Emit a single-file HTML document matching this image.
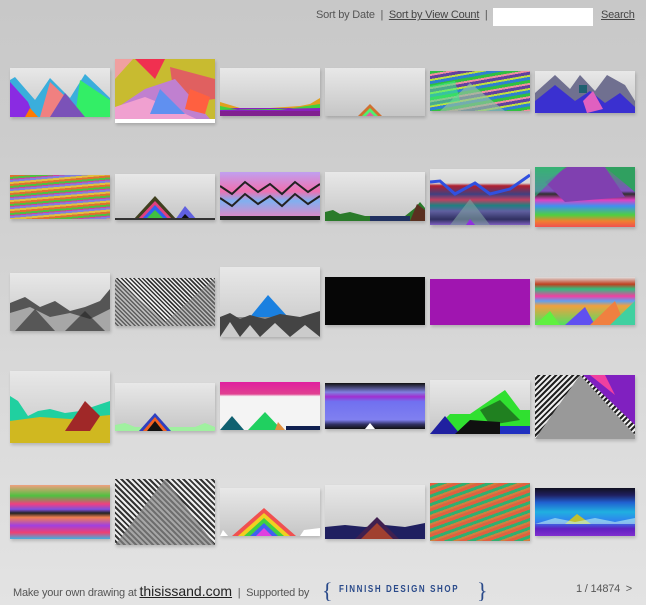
<!DOCTYPE html>
<html><head><meta charset="utf-8"><style>
*{margin:0;padding:0;box-sizing:border-box}
body{width:646px;height:605px;overflow:hidden;background:linear-gradient(#c8c8c8 0px,#cdcdcd 150px,#dadada 400px,#e3e3e3 605px);font-family:"Liberation Sans",sans-serif;position:relative}
.t{position:absolute;width:100px;overflow:hidden;box-shadow:1px 2px 3px rgba(0,0,0,.18)}
.t svg{position:absolute;left:0;top:0;width:100%;height:100%}
.sky{background:linear-gradient(#e8e8e8,#c6c6c6)}
.top{position:absolute;top:9px;font-size:11px;color:#555;letter-spacing:-.2px}
.top a{color:#444;text-decoration:underline}
.foot{position:absolute;top:583px;font-size:11px;color:#555;letter-spacing:-.2px}
</style></head><body>
<div class="top" style="left:316px">Sort by Date &nbsp;|&nbsp; <a>Sort by View Count</a> &nbsp;|</div>
<div style="position:absolute;left:493px;top:8px;width:100px;height:18px;background:#fff"></div>
<div class="top" style="left:601px"><a>Search</a></div>

<!-- Row 1 -->
<div class="t sky" style="left:10px;top:68px;height:49px"><svg viewBox="0 0 100 49" preserveAspectRatio="none"><polygon points="0,49 0,12 5,9 25,32 40,10 60,30 75,6 100,30 100,49" fill="#3aaedc"/><polygon points="0,49 0,14 18,34 24,49" fill="#8a2be2"/><polygon points="40,14 60,33 50,49 30,49" fill="#f08080"/><polygon points="70,12 100,32 100,49 65,49" fill="#33ee66"/><polygon points="55,25 75,49 40,49" fill="#7b52b8"/><polygon points="20,40 28,49 15,49" fill="#ff7a00"/></svg></div>
<div class="t" style="left:115px;top:59px;height:64px;background:#c8bb30"><svg viewBox="0 0 100 64" preserveAspectRatio="none"><polygon points="20,0 50,0 40,20" fill="#f03050"/><polygon points="55,8 100,20 100,40 60,45" fill="#e06060"/><polygon points="30,30 60,20 95,60 0,64 0,50" fill="#c080d0"/><polygon points="0,48 30,38 60,50 90,64 0,64" fill="#f0a0d0"/><polygon points="45,30 70,55 35,55" fill="#6090f0"/><polygon points="0,0 18,0 0,20" fill="#f0a0a0"/><rect x="0" y="60" width="100" height="4" fill="#fff"/><polygon points="75,30 95,38 90,55 70,50" fill="#ff6040"/></svg></div>
<div class="t sky" style="left:220px;top:68px;height:48px"><svg viewBox="0 0 100 48" preserveAspectRatio="none"><polygon points="0,48 0,34 20,40 50,40 80,38 90,36 100,30 100,48" fill="#e0a020"/><polygon points="0,48 0,40 100,40 100,48" fill="#8a20c0"/><rect x="0" y="43" width="100" height="5" fill="#802090"/><polygon points="0,38 20,42 60,42 100,36 100,40 0,42" fill="#40d040"/></svg></div>
<div class="t sky" style="left:325px;top:68px;height:48px"><svg viewBox="0 0 100 48" preserveAspectRatio="none"><polygon points="33,48 45,36 57,48" fill="#d07030"/><polygon points="37,48 45,40 53,48" fill="#50f070"/><polygon points="41,48 45,44 49,48" fill="#e060a0"/></svg></div>
<div class="t" style="left:430px;top:71px;height:40px;background:repeating-linear-gradient(170deg,#30c040 0 3px,#f090a0 3px 5px,#6040a0 5px 8px,#c0e040 8px 10px,#3080d0 10px 13px)"><svg viewBox="0 0 100 40" preserveAspectRatio="none"><polygon points="10,40 40,12 75,40" fill="#90c0a0" opacity=".7"/><polygon points="0,15 25,10 30,30 0,35" fill="#40f080" opacity=".6"/></svg></div>
<div class="t sky" style="left:535px;top:71px;height:42px"><svg viewBox="0 0 100 42" preserveAspectRatio="none"><polygon points="0,42 0,22 20,4 35,18 45,4 60,20 72,4 90,14 100,30 100,42" fill="#707090"/><polygon points="0,42 0,30 20,14 40,30 55,20 70,32 85,22 100,36 100,42" fill="#3a30d0"/><polygon points="48,30 58,20 68,38 52,42" fill="#e060c0"/><rect x="44" y="14" width="8" height="8" fill="#206070"/></svg></div>

<!-- Row 2 -->
<div class="t" style="left:10px;top:175px;height:44px;background:repeating-linear-gradient(175deg,#e07030 0 2px,#50c040 2px 4px,#d040a0 4px 5px,#8080e0 5px 7px,#e0c040 7px 9px)"></div>
<div class="t sky" style="left:115px;top:174px;height:46px"><svg viewBox="0 0 100 46" preserveAspectRatio="none"><polygon points="18,46 40,22 62,46" fill="#404020"/><polygon points="22,46 40,27 58,46" fill="#e04080"/><polygon points="26,46 40,31 54,46" fill="#3060f0"/><polygon points="30,46 40,36 50,46" fill="#40c040"/><polygon points="60,46 70,32 82,46" fill="#6060e0"/><polygon points="65,46 70,40 76,46" fill="#111"/><rect x="0" y="44" width="100" height="2" fill="#333"/></svg></div>
<div class="t" style="left:220px;top:172px;height:48px;background:linear-gradient(#c0a0f0,#f070b0 40%,#80b0f0 60%,#f080c0)"><svg viewBox="0 0 100 48" preserveAspectRatio="none"><polyline points="0,14 12,22 25,10 38,20 50,12 62,22 75,10 88,20 100,12" fill="none" stroke="#222" stroke-width="2"/><polyline points="0,26 12,34 25,22 38,32 50,24 62,34 75,22 88,32 100,24" fill="none" stroke="#222" stroke-width="2"/><rect x="0" y="44" width="100" height="4" fill="#222"/></svg></div>
<div class="t sky" style="left:325px;top:172px;height:49px"><svg viewBox="0 0 100 49" preserveAspectRatio="none"><polygon points="0,49 0,40 8,38 15,42 25,40 40,44 60,44 80,44 90,36 95,30 100,36 100,49" fill="#2a7a2a"/><polygon points="45,49 45,44 85,44 85,49" fill="#203060"/><polygon points="85,49 92,32 100,38 100,49" fill="#5a3020"/></svg></div>
<div class="t" style="left:430px;top:169px;height:56px;background:linear-gradient(#e6e6e6 0,#d8d8d8 25%,#b02030 30%,#404080 45%,#c04060 55%,#208080 65%,#6060a0 75%,#303060 90%,#8060c0)"><svg viewBox="0 0 100 56" preserveAspectRatio="none"><polyline points="0,13 10,12 25,25 45,14 60,25 80,20 100,6" fill="none" stroke="#3050e0" stroke-width="3"/><polygon points="20,56 40,30 60,56" fill="#80a0a0" opacity=".6"/><polygon points="36,56 40,50 45,56" fill="#9030e0"/></svg></div>
<div class="t" style="left:535px;top:167px;height:60px;background:linear-gradient(#40a060 0,#8050c0 40%,#303030 45%,#e040c0 55%,#4090f0 65%,#50d040 80%,#f08030 90%,#f05050)"><svg viewBox="0 0 100 60" preserveAspectRatio="none"><polygon points="10,15 32,0 70,0 90,30 30,35" fill="#8040b0"/><polygon points="0,0 30,0 0,30" fill="#30c080" opacity=".6"/><polygon points="70,0 100,0 100,25" fill="#30a060"/></svg></div>

<!-- Row 3 -->
<div class="t sky" style="left:10px;top:273px;height:58px"><svg viewBox="0 0 100 58" preserveAspectRatio="none"><polygon points="0,58 0,30 15,24 30,34 45,28 60,38 75,34 90,28 100,16 100,58" fill="#555"/><polygon points="0,58 0,40 20,34 40,44 60,40 80,46 100,36 100,58" fill="#ddd" opacity=".6"/><polygon points="5,58 25,36 45,58" fill="#222" opacity=".6"/><polygon points="55,58 75,38 95,58" fill="#222" opacity=".6"/></svg></div>
<div class="t" style="left:115px;top:278px;height:48px;background:repeating-linear-gradient(45deg,#eee 0 1.5px,#333 1.5px 3px)"><svg viewBox="0 0 100 48" preserveAspectRatio="none"><polygon points="0,0 50,44 100,0 100,48 0,48" fill="#888" opacity=".5"/></svg></div>
<div class="t sky" style="left:220px;top:267px;height:70px"><svg viewBox="0 0 100 70" preserveAspectRatio="none"><polygon points="30,50 48,28 68,50" fill="#1a80e0"/><rect x="0" y="50" width="100" height="20" fill="#888"/><polygon points="0,70 0,50 10,46 20,52 30,48 45,52 60,47 80,50 100,44 100,70" fill="#444"/><polygon points="0,70 10,55 20,70 30,58 40,70 55,56 70,70 85,58 100,70" fill="#eee" opacity=".8"/></svg></div>
<div class="t" style="left:325px;top:277px;height:48px;background:#060606"></div>
<div class="t" style="left:430px;top:279px;height:46px;background:#a015b0"></div>
<div class="t" style="left:535px;top:277px;height:48px;background:linear-gradient(#e0e0e0 0,#c04020 15%,#30c080 25%,#f040a0 40%,#60a0f0 50%,#f0a040 60%,#50e060)"><svg viewBox="0 0 100 48" preserveAspectRatio="none"><polygon points="30,48 50,30 60,48" fill="#6050f0"/><polygon points="55,48 80,24 90,48" fill="#f08040"/><polygon points="75,48 100,24 100,48" fill="#40d0a0"/><polygon points="0,48 15,34 25,48" fill="#60f040"/></svg></div>

<!-- Row 4 -->
<div class="t sky" style="left:10px;top:371px;height:72px"><svg viewBox="0 0 100 72" preserveAspectRatio="none"><polygon points="0,72 0,25 8,30 18,45 28,40 40,38 55,42 70,40 85,35 100,30 100,72" fill="#20d0a0"/><polygon points="0,72 0,50 30,46 60,48 100,44 100,72" fill="#d0b820"/><polygon points="55,60 75,30 90,45 80,60" fill="#a02828"/></svg></div>
<div class="t sky" style="left:115px;top:383px;height:48px"><svg viewBox="0 0 100 48" preserveAspectRatio="none"><polygon points="0,48 0,42 10,40 20,44 80,44 90,40 100,44 100,48" fill="#a0f0a0"/><polygon points="24,48 40,30 56,48" fill="#3040c0"/><polygon points="28,48 40,34 52,48" fill="#f06020"/><polygon points="32,48 40,38 48,48" fill="#111"/></svg></div>
<div class="t" style="left:220px;top:382px;height:48px;background:linear-gradient(#e020a0 0,#e04090 25%,#f4f4f4 30%,#f4f4f4 100%)"><svg viewBox="0 0 100 48" preserveAspectRatio="none"><polygon points="0,48 12,34 24,48" fill="#106070"/><polygon points="28,48 45,30 62,48" fill="#20d060"/><polygon points="58,40 65,48 55,48" fill="#e09040"/><rect x="66" y="44" width="34" height="4" fill="#102050"/></svg></div>
<div class="t" style="left:325px;top:383px;height:46px;background:linear-gradient(#101010 0,#8080e0 20%,#a030d0 30%,#7070f0 40%,#8080f0 80%,#303060 90%,#111)"><svg viewBox="0 0 100 46" preserveAspectRatio="none"><polygon points="40,46 45,40 50,46" fill="#fff"/></svg></div>
<div class="t sky" style="left:430px;top:380px;height:54px"><svg viewBox="0 0 100 54" preserveAspectRatio="none"><polygon points="0,54 20,34 40,34 75,10 90,30 100,30 100,54" fill="#30e030"/><polygon points="50,30 70,20 90,40 60,45" fill="#208020"/><polygon points="0,54 15,36 30,54" fill="#2020a0"/><polygon points="25,54 40,40 70,42 70,54" fill="#101010"/><rect x="70" y="46" width="30" height="8" fill="#2030c0"/></svg></div>
<div class="t" style="left:535px;top:375px;height:64px;background:repeating-linear-gradient(135deg,#eee 0 2px,#222 2px 4px)"><svg viewBox="0 0 100 64" preserveAspectRatio="none"><polygon points="0,64 45,0 100,60 100,64" fill="#999"/><polygon points="48,0 100,0 100,50" fill="#8020c0"/><polygon points="55,0 70,0 80,20" fill="#f040a0"/></svg></div>

<!-- Row 5 -->
<div class="t" style="left:10px;top:485px;height:54px;background:linear-gradient(#f0a080 0,#50c040 20%,#f04080 35%,#8050e0 45%,#222 52%,#f08050 60%,#a040e0 75%,#f04070 88%,#40b0e0)"></div>
<div class="t" style="left:115px;top:479px;height:66px;background:repeating-linear-gradient(45deg,#eee 0 2px,#333 2px 4px)"><svg viewBox="0 0 100 66" preserveAspectRatio="none"><polygon points="0,66 50,0 100,66" fill="#888" opacity=".7"/></svg></div>
<div class="t sky" style="left:220px;top:488px;height:48px"><svg viewBox="0 0 100 48" preserveAspectRatio="none"><polygon points="0,48 3,42 8,48" fill="#fff"/><polygon points="80,48 84,42 100,40 100,48" fill="#fff"/><polygon points="12,48 44,20 76,48" fill="#f05050"/><polygon points="18,48 44,25 70,48" fill="#f0d020"/><polygon points="24,48 44,30 64,48" fill="#40d040"/><polygon points="30,48 44,35 58,48" fill="#4060f0"/><polygon points="36,48 44,40 52,48" fill="#e040e0"/></svg></div>
<div class="t sky" style="left:325px;top:485px;height:54px"><svg viewBox="0 0 100 54" preserveAspectRatio="none"><polygon points="0,54 0,42 20,40 40,42 60,40 80,42 100,38 100,54" fill="#202060"/><polygon points="30,54 52,32 74,54" fill="#402050"/><polygon points="36,54 52,38 68,54" fill="#a04030"/></svg></div>
<div class="t" style="left:430px;top:483px;height:58px;background:repeating-linear-gradient(160deg,#e06040 0 3px,#30b070 3px 6px,#d08040 6px 8px)"></div>
<div class="t" style="left:535px;top:488px;height:48px;background:linear-gradient(#101020 0,#202060 15%,#2060d0 30%,#20b0e0 50%,#3080f0 70%,#6020c0 85%,#8030d0)"><svg viewBox="0 0 100 48" preserveAspectRatio="none"><polygon points="30,36 42,26 56,36" fill="#c0c030"/><polygon points="0,36 20,30 40,34 60,30 80,34 100,30 100,36 0,36" fill="#c0f0f0" opacity=".6"/></svg></div>

<div class="foot" style="left:13px">Make your own drawing at <span style="font-size:14px;color:#222;text-decoration:underline;letter-spacing:0">thisissand.com</span> &nbsp;|&nbsp; Supported by</div>
<div style="position:absolute;left:322px;top:578px;font-size:22px;color:#2a4a8a;font-family:'Liberation Serif',serif">{</div>
<div style="position:absolute;left:339px;top:584px;font-size:10px;font-weight:bold;color:#2a4a8a;letter-spacing:2px;white-space:nowrap;transform:scaleX(.8);transform-origin:left top">FINNISH DESIGN SHOP</div>
<div style="position:absolute;left:477px;top:578px;font-size:22px;color:#2a4a8a;font-family:'Liberation Serif',serif">}</div>
<div class="foot" style="left:576px">1 / 14874 &nbsp;&gt;</div>
</body></html>
